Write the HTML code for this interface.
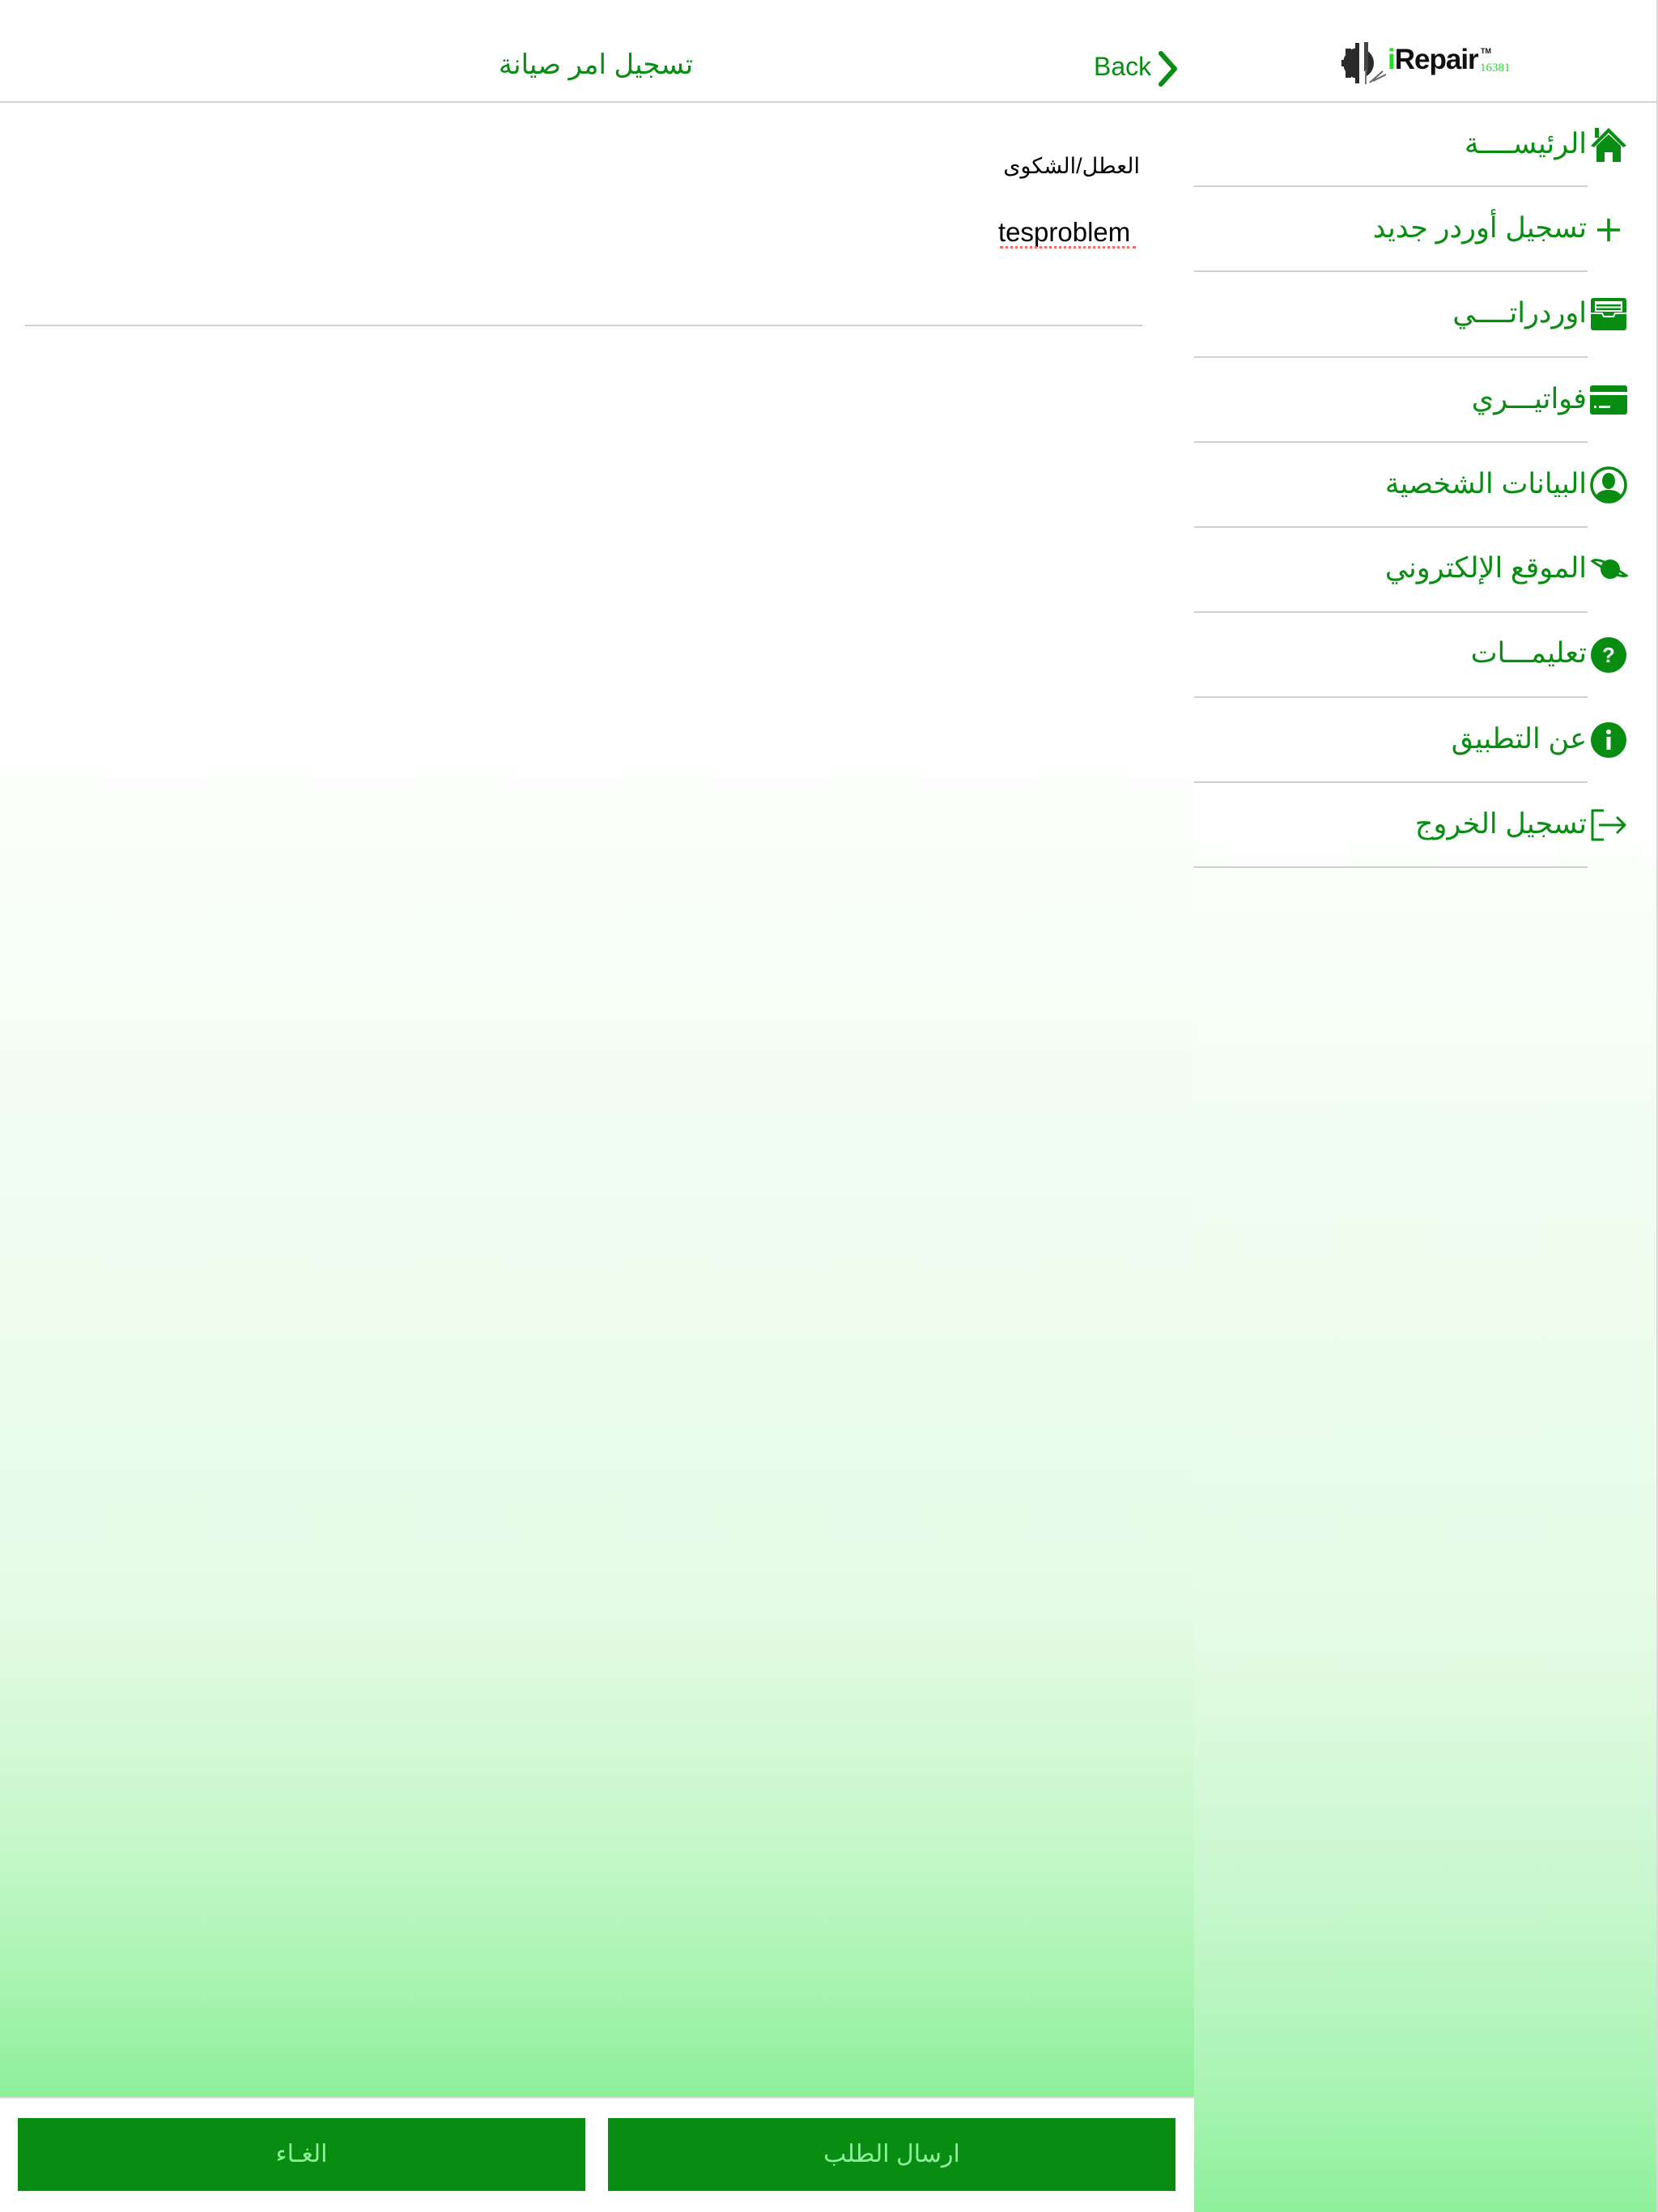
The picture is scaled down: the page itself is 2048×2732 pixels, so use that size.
<!DOCTYPE html>
<html><head><meta charset="utf-8"><style>
*{margin:0;padding:0;box-sizing:border-box}
body{width:2048px;height:2732px;position:relative;overflow:hidden;background:#fff;font-family:"Liberation Sans","Noto Sans CJK SC",sans-serif}
.main{position:absolute;left:0;top:128px;width:1475px;height:2462px;background:linear-gradient(#fff 0%,#fff 30%,#f3fdf3 50%,#e6fbe6 75%,#c4f7c8 88%,#8ef09b 100%)}
.side{position:absolute;left:1475px;top:128px;width:572px;height:2604px;background:linear-gradient(#fff 0%,#fff 33%,#f1fdf1 50%,#e6fbe6 72%,#c8f7ce 85%,#a9f4b4 94%,#8ef09b 100%)}
.rb{position:absolute;left:2046px;top:0;width:2px;height:2732px;background:#d8d8d8}
.hdr{position:absolute;left:0;top:0;width:2046px;height:127px;background:#fff;border-bottom:2px solid #d4d4d4}
.g{color:#088c12}
.t{position:absolute;white-space:nowrap;direction:rtl}
.sep{position:absolute;left:1475px;width:486px;height:2px;background:#d0d0d0}
.item{position:absolute;right:88px;font-size:35px;color:#088c12;direction:rtl;white-space:nowrap;line-height:50px}
.ic{position:absolute;left:1963px;width:48px;height:48px}
.bot{position:absolute;left:0;top:2590px;width:1475px;height:142px;background:#fff;border-top:2px solid #e0e0e0}
.btn{position:absolute;top:2616px;height:90px;background:#088c12;color:#8ef09b;font-size:30px;text-align:center;line-height:90px;direction:rtl}
</style></head><body>
<div class="main"></div>
<div class="side"></div>
<div class="hdr"></div>
<div class="rb"></div>

<!-- logo -->
<svg style="position:absolute;left:1652px;top:48px" width="62" height="60" viewBox="0 0 62 60">
<g fill="#2a2a2a"><circle cx="26" cy="30" r="19"/><rect x="22" y="5" width="8" height="8"/><rect x="22" y="47" width="8" height="8"/><rect x="5" y="26" width="8" height="8"/><rect x="10" y="12" width="7" height="7"/><rect x="10" y="41" width="7" height="7"/></g>
<rect x="27" y="2" width="8" height="56" fill="#fff"/>
<rect x="33" y="4" width="5" height="36" fill="#444"/><rect x="34" y="38" width="2" height="18" fill="#777"/>
<path d="M40 54 L56 40 M44 52 L60 44" stroke="#666" stroke-width="2"/>
</svg>
<div style="position:absolute;left:1714px;top:54px;font:bold 35px 'Liberation Sans',sans-serif;color:#111;white-space:nowrap;letter-spacing:-1px"><span style="color:#22dd22">i</span>Repair</div>
<div style="position:absolute;left:1828px;top:76px;font:15px 'Liberation Serif',serif;color:#22dd22">16381</div>
<div style="position:absolute;left:1829px;top:58px;font:bold 9px 'Liberation Sans',sans-serif;color:#111">TM</div>

<!-- back -->
<div style="position:absolute;left:1351px;top:62px;font-size:32px;color:#088c12;line-height:40px">Back</div>
<svg style="position:absolute;left:1428px;top:62px" width="30" height="46" viewBox="0 0 30 46"><path d="M6 4 L23 23 L6 42" fill="none" stroke="#088c12" stroke-width="6" stroke-linecap="round" stroke-linejoin="round"/></svg>

<div class="t g" style="left:600px;width:272px;top:60px;font-size:34px;text-align:center;direction:rtl">تسجيل امر صيانة</div>

<div class="t" style="right:640px;top:190px;font-size:27px;color:#000">العطل/الشكوى</div>
<div style="position:absolute;left:1233px;top:268px;font-size:33px;color:#000;white-space:nowrap">tesproblem</div>
<div style="position:absolute;left:1235px;top:304px;width:168px;border-top:3px dotted #f06a6a"></div>
<div style="position:absolute;left:31px;top:401px;width:1380px;height:2px;background:#cfcfcf"></div>

<!-- sidebar -->
<div class="sep" style="top:229px"></div>
<div class="sep" style="top:334px"></div>
<div class="sep" style="top:440px"></div>
<div class="sep" style="top:545px"></div>
<div class="sep" style="top:650px"></div>
<div class="sep" style="top:755px"></div>
<div class="sep" style="top:860px"></div>
<div class="sep" style="top:965px"></div>
<div class="sep" style="top:1070px"></div>

<div class="item" style="top:153px">الرئيســــة</div>
<div class="item" style="top:257px">تسجيل أوردر جديد</div>
<div class="item" style="top:362px">اوردراتــــي</div>
<div class="item" style="top:468px">فواتيـــري</div>
<div class="item" style="top:573px">البيانات الشخصية</div>
<div class="item" style="top:677px">الموقع الإلكتروني</div>
<div class="item" style="top:782px">تعليمـــات</div>
<div class="item" style="top:888px">عن التطبيق</div>
<div class="item" style="top:993px">تسجيل الخروج</div>

<svg class="ic" style="top:154px" viewBox="0 0 48 48"><path d="M24 4 L2 26 L6 28 L24 10 L42 28 L46 26 Z" fill="#088c12"/><rect x="7" y="4" width="5" height="12" fill="#088c12"/><path d="M9 26 L24 12 L39 26 V46 H29 V34 H19 V46 H9 Z" fill="#088c12"/></svg>
<svg class="ic" style="top:258px" viewBox="0 0 48 48"><path d="M24 12 V40 M10 26 H38" stroke="#088c12" stroke-width="3.5"/></svg>
<svg class="ic" style="top:364px" viewBox="0 0 48 48"><rect x="2" y="4" width="44" height="40" rx="3" fill="#088c12"/><rect x="7" y="8" width="34" height="13" fill="#fff"/><rect x="9" y="12" width="30" height="2.5" fill="#088c12"/><rect x="9" y="16.5" width="30" height="2.5" fill="#088c12"/><path d="M2 23 H16 L18 27 H30 L32 23 H46" stroke="#fff" stroke-width="2" fill="none"/></svg>
<svg class="ic" style="top:470px" viewBox="0 0 48 48"><rect x="1" y="6" width="46" height="36" rx="3" fill="#088c12"/><rect x="1" y="14" width="46" height="4" fill="#fff"/><rect x="6" y="31" width="3" height="3" fill="#fff"/><rect x="12" y="31" width="14" height="3" fill="#fff"/></svg>
<svg class="ic" style="top:575px" viewBox="0 0 48 48"><circle cx="24" cy="24" r="21" fill="none" stroke="#088c12" stroke-width="3.5"/><ellipse cx="24" cy="19" rx="8" ry="10" fill="#088c12"/><path d="M8 38 Q12 30 24 30 Q36 30 40 38 Q33 45 24 45 Q15 45 8 38Z" fill="#088c12"/></svg>
<svg class="ic" style="top:679px" viewBox="0 0 48 48"><circle cx="26" cy="24" r="12" fill="#088c12"/><path d="M4 14 Q10 10 24 18 Q40 28 46 32 Q40 34 28 28 Q12 20 4 14Z" fill="none" stroke="#088c12" stroke-width="3"/></svg>
<svg class="ic" style="top:785px" viewBox="0 0 48 48"><circle cx="24" cy="24" r="22" fill="#088c12"/><text x="24" y="33" text-anchor="middle" font-family="Liberation Sans" font-weight="bold" font-size="26" fill="#fff">?</text></svg>
<svg class="ic" style="top:890px" viewBox="0 0 48 48"><circle cx="24" cy="24" r="22" fill="#088c12"/><rect x="21.5" y="20" width="5" height="16" fill="#fff"/><circle cx="24" cy="14" r="3" fill="#fff"/></svg>
<svg class="ic" style="top:995px" viewBox="0 0 48 48"><path d="M18 6 H4 V42 H18" fill="none" stroke="#088c12" stroke-width="3" stroke-linejoin="round"/><path d="M12 24 H44 M34 14 L44 24 L34 34" fill="none" stroke="#088c12" stroke-width="3" stroke-linejoin="round"/></svg>

<div class="bot"></div>
<div class="btn" style="left:22px;width:701px">الغـاء</div>
<div class="btn" style="left:751px;width:701px">ارسال الطلب</div>
</body></html>
